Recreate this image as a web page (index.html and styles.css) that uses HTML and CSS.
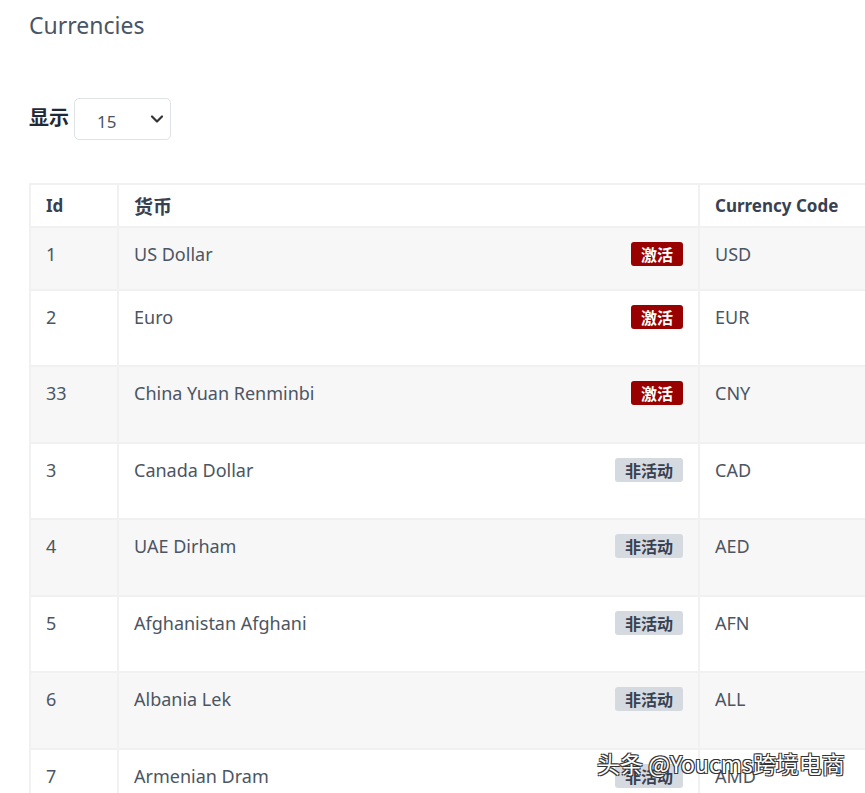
FILE: index.html
```html
<!DOCTYPE html>
<html lang="zh">
<head>
    <meta charset="UTF-8">
    <meta name="viewport" content="width=device-width, initial-scale=1.0">
    <title>Currencies</title>
    <link rel="stylesheet" href="styles.css">
</head>
<body>
    <div class="page">
        <h1 class="title">Currencies</h1>

        <div class="length">
            <label for="perPage">显示</label>
            <div class="select-box">
                <span>15</span>
                <svg width="14" height="10" viewBox="0 0 14 10"><path d="M2 2.5 L7 7.5 L12 2.5" fill="none" stroke="#333" stroke-width="2.2" stroke-linecap="round" stroke-linejoin="round"/></svg>
            </div>
        </div>

        <div class="table-wrap">
            <table class="currencies">
                <thead>
                    <tr>
                        <th class="col-id">Id</th>
                        <th class="col-name">货币</th>
                        <th class="col-code">Currency Code</th>
                    </tr>
                </thead>
                <tbody>
                    <tr class="short">
                        <td>1</td>
                        <td><div class="name-cell">US Dollar <span class="badge active">激活</span></div></td>
                        <td>USD</td>
                    </tr>
                    <tr>
                        <td>2</td>
                        <td><div class="name-cell">Euro <span class="badge active">激活</span></div></td>
                        <td>EUR</td>
                    </tr>
                    <tr>
                        <td>33</td>
                        <td><div class="name-cell">China Yuan Renminbi <span class="badge active">激活</span></div></td>
                        <td>CNY</td>
                    </tr>
                    <tr>
                        <td>3</td>
                        <td><div class="name-cell">Canada Dollar <span class="badge inactive">非活动</span></div></td>
                        <td>CAD</td>
                    </tr>
                    <tr>
                        <td>4</td>
                        <td><div class="name-cell">UAE Dirham <span class="badge inactive">非活动</span></div></td>
                        <td>AED</td>
                    </tr>
                    <tr>
                        <td>5</td>
                        <td><div class="name-cell">Afghanistan Afghani <span class="badge inactive">非活动</span></div></td>
                        <td>AFN</td>
                    </tr>
                    <tr>
                        <td>6</td>
                        <td><div class="name-cell">Albania Lek <span class="badge inactive">非活动</span></div></td>
                        <td>ALL</td>
                    </tr>
                    <tr>
                        <td>7</td>
                        <td><div class="name-cell">Armenian Dram <span class="badge inactive">非活动</span></div></td>
                        <td>AMD</td>
                    </tr>
                </tbody>
            </table>
        </div>
    </div>

    <div class="watermark">头条 @Youcms跨境电商</div>
</body>
</html>
```

FILE: styles.css
```css
html, body {
    margin: 0;
    padding: 0;
    overflow: hidden;
}

body {
    font-family: 'Noto Sans', 'Noto Sans CJK SC', sans-serif;
    background: #ffffff;
    color: #4b5563;
    height: 793px;
}

.page {
    padding: 8px 0 0 29px;
}

.title {
    margin: 0;
    font-size: 23px;
    font-weight: 400;
    color: #4b5563;
    line-height: 34px;
}

.length {
    display: flex;
    align-items: center;
    margin-top: 56px;
    gap: 5px;
}

.length label {
    font-family: 'Noto Sans CJK SC', sans-serif;
    font-size: 20px;
    font-weight: 700;
    color: #1f2937;
    padding-bottom: 6px;
}

.select-box {
    width: 97px;
    height: 42px;
    box-sizing: border-box;
    border: 1px solid #dfe2e6;
    border-radius: 5px;
    display: flex;
    align-items: center;
    justify-content: space-between;
    padding: 5px 6px 0 22px;
    font-size: 17px;
    color: #4b5563;
}

.select-box svg {
    margin-top: -5px;
}

.table-wrap {
    margin-top: 43px;
    width: 1000px;
}

.currencies {
    width: 1000px;
    border-collapse: collapse;
    border: 2px solid #f1f1f1;
    font-size: 18px;
}

.currencies th,
.currencies td {
    border: 2px solid #f1f1f1;
    text-align: left;
    vertical-align: top;
    padding: 0 15px;
}

.currencies th {
    height: 41px;
    font-weight: 700;
    color: #374151;
    vertical-align: middle;
    font-size: 17px;
}

.currencies th.col-name {
    font-family: 'Noto Sans CJK SC', sans-serif;
    font-size: 19px;
}

.col-id { width: 56px; }
.col-name { width: 549px; }

.currencies td {
    height: 76px;
    padding-top: 14px;
    box-sizing: border-box;
}

.currencies tbody tr:nth-child(odd) td {
    height: 77px;
}

.currencies tbody tr.short td {
    height: 63px;
}

.currencies tbody tr:nth-child(odd) {
    background: #f7f7f7;
}

.name-cell {
    display: flex;
    justify-content: space-between;
    align-items: flex-start;
}

.badge {
    font-family: 'Noto Sans CJK SC', sans-serif;
    font-size: 16px;
    font-weight: 700;
    line-height: 24px;
    padding: 0 10px;
    border-radius: 3px;
}

.badge.active {
    background: #990000;
    color: #ffffff;
}

.badge.inactive {
    background: #d5d9e0;
    color: #374151;
}

.watermark {
    position: absolute;
    left: 597px;
    top: 746px;
    font-family: 'Noto Sans CJK SC', sans-serif;
    font-size: 23px;
    color: #ffffff;
    text-shadow: -1px -1px 0 #333, 1px -1px 0 #333, -1px 1px 0 #333, 1px 1px 0 #333;
}
```
